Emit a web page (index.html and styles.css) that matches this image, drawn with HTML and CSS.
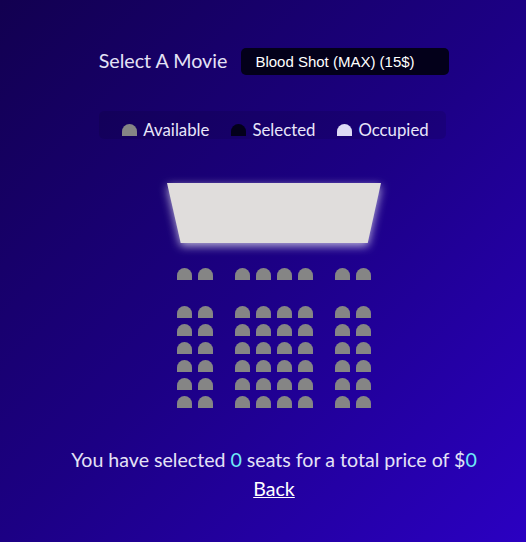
FILE: index.html
```html
<!DOCTYPE html>
<html lang="en">
<head>
<meta charset="UTF-8">
<title>Movie Seat Booking</title>
<link rel="stylesheet" href="styles.css">
</head>
<body>
<main class="page">
  <div class="movie-container">
    <label class="movie-label" for="movie">Select A Movie</label>
    <select class="movie-select" id="movie">
      <option>Blood Shot (MAX) (15$)</option>
    </select>
  </div>

  <ul class="showcase">
    <li class="showcase-item"><span class="seat"></span><small>Available</small></li>
    <li class="showcase-item"><span class="seat selected"></span><small>Selected</small></li>
    <li class="showcase-item"><span class="seat occupied"></span><small>Occupied</small></li>
  </ul>

  <div class="theatre">
    <div class="screen-glow"><div class="screen"></div></div>

    <div class="row row-first">
      <span class="seat"></span><span class="seat"></span><span class="seat"></span><span class="seat"></span><span class="seat"></span><span class="seat"></span><span class="seat"></span><span class="seat"></span>
    </div>
    <div class="row">
      <span class="seat"></span><span class="seat"></span><span class="seat"></span><span class="seat"></span><span class="seat"></span><span class="seat"></span><span class="seat"></span><span class="seat"></span>
    </div>
    <div class="row">
      <span class="seat"></span><span class="seat"></span><span class="seat"></span><span class="seat"></span><span class="seat"></span><span class="seat"></span><span class="seat"></span><span class="seat"></span>
    </div>
    <div class="row">
      <span class="seat"></span><span class="seat"></span><span class="seat"></span><span class="seat"></span><span class="seat"></span><span class="seat"></span><span class="seat"></span><span class="seat"></span>
    </div>
    <div class="row">
      <span class="seat"></span><span class="seat"></span><span class="seat"></span><span class="seat"></span><span class="seat"></span><span class="seat"></span><span class="seat"></span><span class="seat"></span>
    </div>
    <div class="row">
      <span class="seat"></span><span class="seat"></span><span class="seat"></span><span class="seat"></span><span class="seat"></span><span class="seat"></span><span class="seat"></span><span class="seat"></span>
    </div>
    <div class="row">
      <span class="seat"></span><span class="seat"></span><span class="seat"></span><span class="seat"></span><span class="seat"></span><span class="seat"></span><span class="seat"></span><span class="seat"></span>
    </div>
  </div>

  <p class="summary">You have selected <span class="count">0</span> seats for a total price of $<span class="count">0</span></p>
  <a class="back" href="#">Back</a>
</main>
</body>
</html>
```

FILE: styles.css
```css
* {
  box-sizing: border-box;
}

html, body {
  margin: 0;
  padding: 0;
}

body {
  min-height: 100vh;
  background: linear-gradient(to bottom right, #120050 0%, #1c0084 50%, #2b00c2 100%);
  font-family: Lato, "Open Sans", sans-serif;
  color: #e4e2f6;
}

.page {
  display: flex;
  flex-direction: column;
  align-items: center;
  padding: 48px 0 0 22px;
  height: 542px;
}

.movie-container {
  display: flex;
  align-items: center;
  height: 27px;
}

.movie-label {
  font-size: 19.7px;
  margin-right: 14px;
  position: relative;
  top: -1px;
}

.movie-select {
  appearance: none;
  -webkit-appearance: none;
  width: 208px;
  height: 27px;
  border: 0;
  border-radius: 5px;
  background: #03001a;
  color: #ffffff;
  font-family: "Liberation Sans", Arial, sans-serif;
  font-size: 15px;
  padding: 0 0 0 14px;
  outline: none;
}

.showcase {
  list-style: none;
  display: flex;
  align-items: center;
  gap: 22px;
  margin: 36px 0 0 -3px;
  padding: 9px 17px 0 23px;
  height: 28px;
  background: rgba(0, 0, 0, 0.1);
  border-radius: 5px;
}

.showcase-item {
  display: flex;
  align-items: center;
}

.showcase-item small {
  font-size: 16.8px;
  margin-left: 6px;
  color: #e8e6fa;
}

.seat {
  display: inline-block;
  width: 15px;
  height: 12px;
  background: #858585;
  border-radius: 10px 10px 0 0;
}

.seat.selected {
  background: #03001a;
}

.seat.occupied {
  background: #dddaf4;
}

.theatre {
  display: flex;
  flex-direction: column;
  align-items: center;
}

.screen-glow {
  margin-top: 44px;
  filter: drop-shadow(0 3px 5px rgba(255, 255, 255, 0.7));
}

.screen {
  width: 214px;
  height: 60px;
  background: #e0dddc;
  clip-path: polygon(0 0, 100% 0, 93.8% 100%, 6.4% 100%);
}

.row {
  display: flex;
}

.row .seat {
  margin: 3px;
}

.row .seat:nth-child(2) {
  margin-right: 19px;
}

.row .seat:nth-child(7) {
  margin-left: 19px;
}

.row-first {
  margin-top: 22px;
  margin-bottom: 20px;
}

.summary {
  font-size: 19.6px;
  margin: 34px 0 0 0;
  line-height: 29px;
}

.count {
  color: #6feaf6;
}

.back {
  font-size: 19.6px;
  line-height: 29px;
  color: #ffffff;
  text-decoration: underline;
}
```
